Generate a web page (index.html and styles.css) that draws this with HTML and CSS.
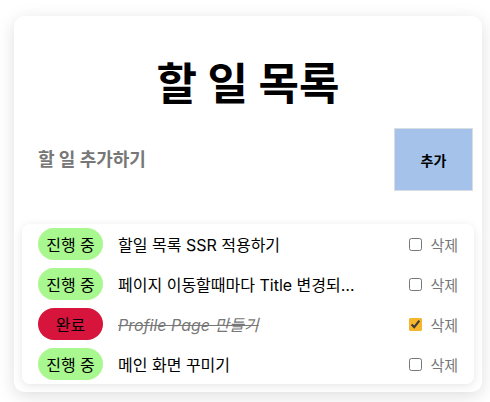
FILE: index.html
```html
<!DOCTYPE html>
<html lang="ko">
<head>
<meta charset="utf-8">
<link rel="stylesheet" href="styles.css">
</head>
<body>
<main class="card">
  <h1 class="title">할 일 목록</h1>
  <form class="add-form">
    <input class="add-input" type="text" placeholder="할 일 추가하기">
    <button class="add-btn" type="button">추가</button>
  </form>
  <ul class="todo-list">
    <li class="todo">
      <span class="badge badge-progress">진행 중</span>
      <span class="todo-text">할일 목록 SSR 적용하기</span>
      <label class="todo-del"><input type="checkbox" class="check"><span>삭제</span></label>
    </li>
    <li class="todo">
      <span class="badge badge-progress">진행 중</span>
      <span class="todo-text">페이지 이동할때마다 Title 변경되도록 하기</span>
      <label class="todo-del"><input type="checkbox" class="check"><span>삭제</span></label>
    </li>
    <li class="todo">
      <span class="badge badge-done">완료</span>
      <span class="todo-text done">Profile Page 만들기</span>
      <label class="todo-del"><input type="checkbox" class="check" checked><span>삭제</span></label>
    </li>
    <li class="todo">
      <span class="badge badge-progress">진행 중</span>
      <span class="todo-text">메인 화면 꾸미기</span>
      <label class="todo-del"><input type="checkbox" class="check"><span>삭제</span></label>
    </li>
  </ul>
</main>
</body>
</html>
```
FILE: styles.css
```css
* { box-sizing: border-box; }
html, body { margin: 0; padding: 0; background: #fff; }
body {
  font-family: "Inter", "Noto Sans CJK KR", sans-serif;
  padding: 16px 8px 10px 14px;
}
.card {
  width: 468px;
  background: #fff;
  border-radius: 10px;
  box-shadow: 0 4px 18px rgba(0,0,0,0.13);
  padding: 0 8px 8px;
}
.title {
  margin: 0;
  text-align: center;
  font-size: 44px;
  font-weight: 700;
  line-height: 60px;
  padding: 38px 0 14px;
  color: #000;
}
.add-form {
  display: flex;
  height: 63px;
  margin: 0 1px 0 0;
}
.add-input {
  flex: 1;
  min-width: 0;
  border: none;
  outline: none;
  padding: 0 16px;
  font-family: inherit;
  font-size: 18px;
  font-weight: 700;
  background: transparent;
}
.add-input::placeholder { color: #777; }
.add-btn {
  flex: 0 0 79px;
  width: 79px;
  background: #a4c2ea;
  border: 1px solid #d8dde4;
  font-family: inherit;
  font-size: 14px;
  font-weight: 700;
  color: #000;
  padding: 0;
}
.todo-list {
  list-style: none;
  margin: 33px 0 0;
  padding: 0 16px;
  border-radius: 8px;
  box-shadow: 0 2px 10px rgba(0,0,0,0.10);
}
.todo {
  display: flex;
  align-items: center;
  height: 40px;
}
.badge {
  width: 65px;
  height: 32px;
  border-radius: 16px;
  display: flex;
  align-items: center;
  justify-content: center;
  font-size: 16px;
  color: #000;
  flex-shrink: 0;
}
.badge-progress { background: #a8f88f; }
.badge-done { background: #d6143c; }
.todo-text {
  margin-left: 15px;
  width: 251px;
  font-size: 16px;
  color: #000;
  white-space: nowrap;
  overflow: hidden;
  text-overflow: ellipsis;
}
.todo-text.done {
  color: #777;
  font-style: italic;
  text-decoration: line-through;
}
.todo-del {
  margin-left: auto;
  display: flex;
  align-items: center;
  font-size: 15px;
  color: #777;
}
.check {
  width: 13px;
  height: 13px;
  margin: 0 8px 0 0;
  accent-color: #f8b62c;
}
```
